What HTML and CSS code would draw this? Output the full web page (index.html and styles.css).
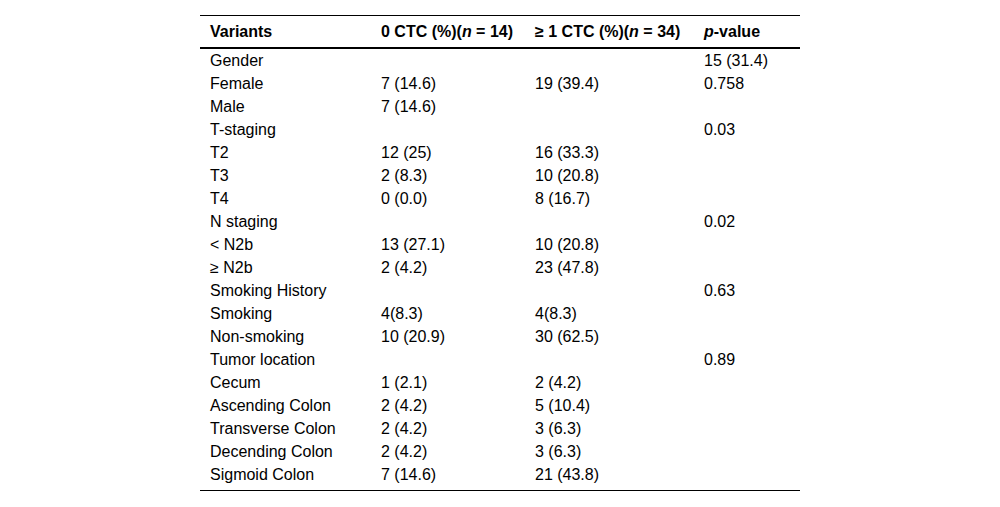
FILE: index.html
```html
<!DOCTYPE html>
<html>
<head>
<meta charset="utf-8">
<link rel="stylesheet" href="styles.css">
</head>
<body>
<table class="data">
  <colgroup>
    <col class="c1"><col class="c2"><col class="c3"><col class="c4">
  </colgroup>
  <thead>
    <tr>
      <th>Variants</th>
      <th>0 CTC (%)(<i>n</i> = 14)</th>
      <th>≥ 1 CTC (%)(<i>n</i> = 34)</th>
      <th><i>p</i>-value</th>
    </tr>
  </thead>
  <tbody>
    <tr><td>Gender</td><td></td><td></td><td>15 (31.4)</td></tr>
    <tr><td>Female</td><td>7 (14.6)</td><td>19 (39.4)</td><td>0.758</td></tr>
    <tr><td>Male</td><td>7 (14.6)</td><td></td><td></td></tr>
    <tr><td>T-staging</td><td></td><td></td><td>0.03</td></tr>
    <tr><td>T2</td><td>12 (25)</td><td>16 (33.3)</td><td></td></tr>
    <tr><td>T3</td><td>2 (8.3)</td><td>10 (20.8)</td><td></td></tr>
    <tr><td>T4</td><td>0 (0.0)</td><td>8 (16.7)</td><td></td></tr>
    <tr><td>N staging</td><td></td><td></td><td>0.02</td></tr>
    <tr><td>&lt; N2b</td><td>13 (27.1)</td><td>10 (20.8)</td><td></td></tr>
    <tr><td>≥ N2b</td><td>2 (4.2)</td><td>23 (47.8)</td><td></td></tr>
    <tr><td>Smoking History</td><td></td><td></td><td>0.63</td></tr>
    <tr><td>Smoking</td><td>4(8.3)</td><td>4(8.3)</td><td></td></tr>
    <tr><td>Non-smoking</td><td>10 (20.9)</td><td>30 (62.5)</td><td></td></tr>
    <tr><td>Tumor location</td><td></td><td></td><td>0.89</td></tr>
    <tr><td>Cecum</td><td>1 (2.1)</td><td>2 (4.2)</td><td></td></tr>
    <tr><td>Ascending Colon</td><td>2 (4.2)</td><td>5 (10.4)</td><td></td></tr>
    <tr><td>Transverse Colon</td><td>2 (4.2)</td><td>3 (6.3)</td><td></td></tr>
    <tr><td>Decending Colon</td><td>2 (4.2)</td><td>3 (6.3)</td><td></td></tr>
    <tr class="last"><td>Sigmoid Colon</td><td>7 (14.6)</td><td>21 (43.8)</td><td></td></tr>
  </tbody>
</table>
</body>
</html>
```

FILE: styles.css
```css
html, body {
  margin: 0;
  padding: 0;
  background: #ffffff;
}
body {
  font-family: "Liberation Sans", Arial, sans-serif;
  font-size: 16px;
  color: #000000;
  padding-top: 15px;
}
.data {
  width: 600px;
  margin: 0 auto;
  border-collapse: collapse;
  table-layout: fixed;
  border-top: 1px solid #000;
  border-bottom: 1px solid #000;
}
.c1 { width: 171px; }
.c2 { width: 154px; }
.c3 { width: 169px; }
.c4 { width: 106px; }
.data th {
  text-align: left;
  font-weight: bold;
  padding: 8px 10px 7px;
  line-height: 16px;
  border-bottom: 2px solid #000;
}
.data td {
  padding: 3px 10px;
  line-height: 17px;
  vertical-align: top;
}
.data tr.last td {
  padding-bottom: 7px;
}
```
